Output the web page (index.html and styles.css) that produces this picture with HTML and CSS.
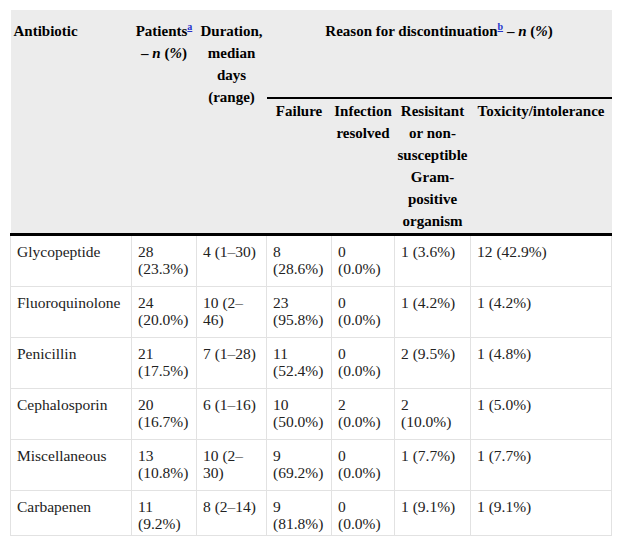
FILE: index.html
```html
<!DOCTYPE html>
<html>
<head>
<meta charset="utf-8">
<link rel="stylesheet" href="styles.css">
</head>
<body>
<div class="wrap">
<table class="data">
  <colgroup>
    <col class="c1"><col class="c2"><col class="c3"><col class="c4"><col class="c5"><col class="c6"><col class="c7">
  </colgroup>
  <thead>
    <tr class="hr1">
      <th rowspan="2" class="left">Antibiotic</th>
      <th rowspan="2">Patients<a class="fn" href="#a">a</a> – <i>n</i> (<i>%</i>)</th>
      <th rowspan="2">Duration, median days (range)</th>
      <th colspan="4" class="group">Reason for discontinuation<a class="fn" href="#b">b</a> – <i>n</i> (<i>%</i>)</th>
    </tr>
    <tr class="hr2">
      <th>Failure</th>
      <th>Infection resolved</th>
      <th>Resisitant or non-susceptible Gram-positive organism</th>
      <th>Toxicity/intolerance</th>
    </tr>
  </thead>
  <tbody>
    <tr><td>Glycopeptide</td><td>28 (23.3%)</td><td>4 (1–30)</td><td>8 (28.6%)</td><td>0 (0.0%)</td><td>1 (3.6%)</td><td>12 (42.9%)</td></tr>
    <tr><td>Fluoroquinolone</td><td>24 (20.0%)</td><td>10 (2–46)</td><td>23 (95.8%)</td><td>0 (0.0%)</td><td>1 (4.2%)</td><td>1 (4.2%)</td></tr>
    <tr><td>Penicillin</td><td>21 (17.5%)</td><td>7 (1–28)</td><td>11 (52.4%)</td><td>0 (0.0%)</td><td>2 (9.5%)</td><td>1 (4.8%)</td></tr>
    <tr><td>Cephalosporin</td><td>20 (16.7%)</td><td>6 (1–16)</td><td>10 (50.0%)</td><td>2 (0.0%)</td><td>2 (10.0%)</td><td>1 (5.0%)</td></tr>
    <tr><td>Miscellaneous</td><td>13 (10.8%)</td><td>10 (2–30)</td><td>9 (69.2%)</td><td>0 (0.0%)</td><td>1 (7.7%)</td><td>1 (7.7%)</td></tr>
    <tr class="last"><td>Carbapenen</td><td>11 (9.2%)</td><td>8 (2–14)</td><td>9 (81.8%)</td><td>0 (0.0%)</td><td>1 (9.1%)</td><td>1 (9.1%)</td></tr>
  </tbody>
</table>
</div>
</body>
</html>
```
FILE: styles.css
```css
html, body {
  margin: 0;
  padding: 0;
  background: #ffffff;
}

.wrap {
  padding: 10px 0 0 10px;
}

.data {
  border-collapse: collapse;
  table-layout: fixed;
  width: 602px;
  font-family: "Liberation Serif", "Times New Roman", serif;
  color: #222;
}

.c1 { width: 121px; }
.c2 { width: 65px; }
.c3 { width: 70px; }
.c4 { width: 65px; }
.c5 { width: 63px; }
.c6 { width: 76px; }
.c7 { width: 141px; }

.data th {
  background: #ececec;
  font-size: 15px;
  line-height: 22px;
  font-weight: bold;
  color: #000;
  text-align: center;
  vertical-align: top;
  padding: 10px 2px 4px;
  border-bottom: 3px solid #000;
}

.data th.left {
  text-align: left;
  padding-left: 3px;
}

.hr1 th.group {
  height: 73px;
  border-bottom: 2px solid #000;
}

.hr2 th {
  padding-top: 1px;
  padding-bottom: 1px;
}

.data i {
  font-style: italic;
}

.fn {
  color: #2233cc;
  text-decoration: underline;
  font-size: 10px;
  vertical-align: top;
  line-height: 14px;
}

.data td {
  font-size: 15.5px;
  line-height: 17px;
  text-align: left;
  vertical-align: top;
  padding: 7px 8px 9px 6px;
  border: 1px solid #e2e2e2;
}

.data tbody tr:first-child td {
  border-top: 3px solid #000;
}

.data tr.last td {
  padding-bottom: 3px;
}
```
